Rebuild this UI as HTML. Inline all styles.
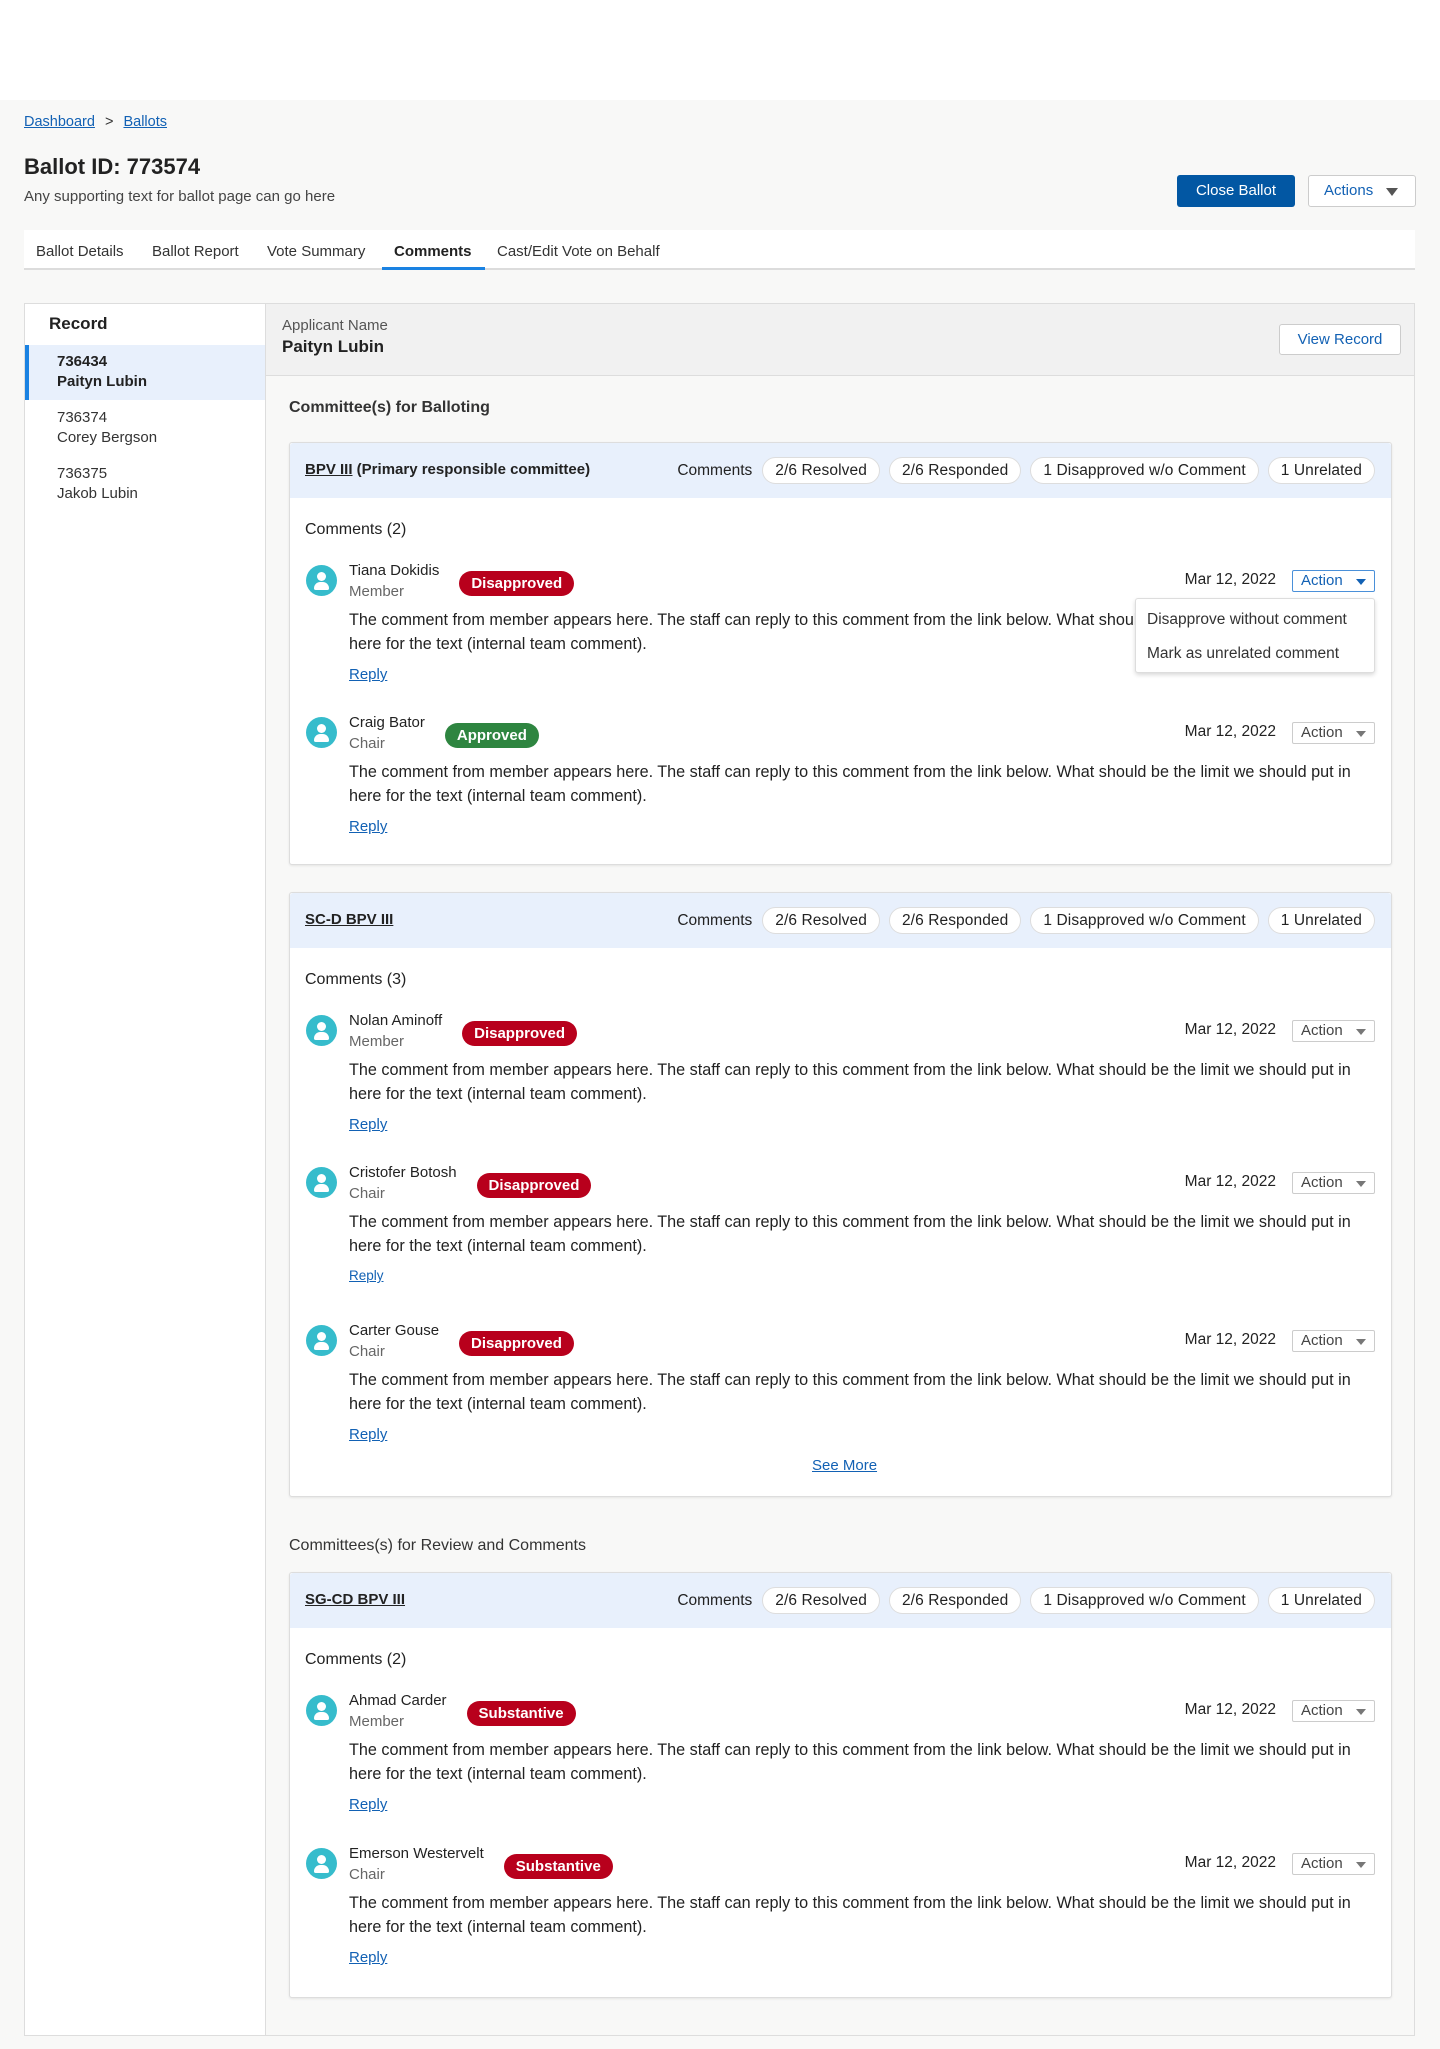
<!DOCTYPE html>
<html><head><meta charset="utf-8">
<style>
*{box-sizing:border-box;margin:0;padding:0}
body{width:1440px;height:2049px;background:#f8f8f7;font-family:"Liberation Sans",sans-serif;color:#222;position:relative;overflow:hidden}
.abs{position:absolute}
a,.link{color:#1261b4;text-decoration:underline}
.topband{left:0;top:0;width:1440px;height:100px;background:#fff}
.tabs{left:24px;top:230px;width:1391px;height:40px;background:#fff;border-bottom:2px solid #dcdcdc}
.tab{position:absolute;top:13px;font-size:15px;color:#333}
.left{left:24px;top:303px;width:241px;height:1733px;background:#fff;border:1px solid #ddd;border-right:none}
.main{left:265px;top:303px;width:1150px;height:1733px;background:#f8f8f7;border:1px solid #ddd}
.card{position:absolute;left:23px;width:1103px;background:#fff;border:1px solid #ddd;border-radius:3px;box-shadow:0 1px 2px rgba(0,0,0,.08)}
.chead{height:55px;background:#e8f0fc;position:relative;border-radius:3px 3px 0 0}
.chead .t{position:absolute;left:15px;top:18px;font-size:15px;font-weight:bold}
.pills{position:absolute;right:16px;top:14px;display:flex;align-items:center;gap:9px;font-size:15.5px}
.pill{height:27px;line-height:25px;padding:0 12px;border:1px solid #ddd;border-radius:14px;background:#fff;color:#222;letter-spacing:.1px}
.ctitle{position:absolute;left:15px;font-size:16px;color:#222}
.cm{position:absolute;left:0;width:1101px;height:152px}
.av{position:absolute;left:16px;top:4px;width:31px;height:31px;border-radius:50%;background:#36bccc;overflow:hidden}
.av:before{content:"";position:absolute;left:11px;top:7px;width:9px;height:9px;border-radius:50%;background:#fff}
.av:after{content:"";position:absolute;left:8px;top:17px;width:15px;height:8px;border-radius:7px 7px 2px 2px;background:#fff}
.nm{position:absolute;left:59px;top:0;display:flex;align-items:flex-start}
.nm .n{font-size:15px;line-height:20px;color:#222}
.nm .r{font-size:15px;line-height:22px;color:#666}
.badge{margin-left:20px;margin-top:10px;height:25px;line-height:25px;padding:0 12px;border-radius:13px;color:#fff;font-weight:bold;font-size:15px}
.red{background:#b8001c}.green{background:#2e8540}
.txt{position:absolute;left:59px;top:47px;font-size:16.2px;line-height:24px;color:#222;white-space:nowrap}
.rep{position:absolute;left:59px;top:105px;font-size:15px}
.date{position:absolute;right:115px;top:10px;font-size:15.5px;color:#222}
.act{position:absolute;right:16px;top:9px;width:83px;height:22px;border:1px solid #ccc;border-radius:2px;font-size:15px;color:#444;padding-left:8px;line-height:20px}
.act:after{content:"";position:absolute;right:8px;top:8px;border:5px solid transparent;border-top:6px solid #777;border-bottom:0}
.act.on{border-color:#4a90d9;color:#1261b4}
.act.on:after{border-top-color:#1261b4}
.sec{position:absolute;left:23px;font-size:16px;color:#333}
</style></head><body>
<div class="abs topband"></div>
<div class="abs" style="left:24px;top:114px;font-size:14.5px"><a>Dashboard</a> <span style="color:#333;margin:0 6px">&gt;</span> <a>Ballots</a></div>
<div class="abs" style="left:24px;top:154px;font-size:22px;font-weight:bold;color:#222">Ballot ID: 773574</div>
<div class="abs" style="left:24px;top:188px;font-size:15px;color:#444">Any supporting text for ballot page can go here</div>
<div class="abs" style="left:1177px;top:175px;width:118px;height:32px;background:#0257a3;border-radius:3px;color:#fff;font-size:15px;text-align:center;line-height:32px">Close Ballot</div>
<div class="abs" style="left:1308px;top:175px;width:108px;height:32px;background:#fff;border:1px solid #ccc;border-radius:3px;color:#1261b4;font-size:15px;line-height:30px;padding-left:15px">Actions<span style="position:absolute;right:17px;top:12px;border:6px solid transparent;border-top:8px solid #555;border-bottom:0"></span></div>
<div class="abs tabs">
<span class="tab" style="left:12px">Ballot Details</span>
<span class="tab" style="left:128px">Ballot Report</span>
<span class="tab" style="left:243px">Vote Summary</span>
<span class="tab" style="left:370px;font-weight:bold;color:#222">Comments</span>
<span class="tab" style="left:473px">Cast/Edit Vote on Behalf</span>
<div style="position:absolute;left:358px;top:37px;width:103px;height:3px;background:#1a82e2"></div>
</div>
<div class="abs left">
<div class="abs" style="left:24px;top:10px;font-size:17px;font-weight:bold;color:#222">Record</div>
<div class="abs" style="left:0;top:41px;width:240px;height:55px;background:#e8f0fc;border-left:4px solid #1a82e2"></div>
<div class="abs" style="left:32px;top:48px;font-size:15px;font-weight:bold;line-height:20px">736434<br>Paityn Lubin</div>
<div class="abs" style="left:32px;top:104px;font-size:15px;line-height:20px;color:#333">736374<br>Corey Bergson</div>
<div class="abs" style="left:32px;top:160px;font-size:15px;line-height:20px;color:#333">736375<br>Jakob Lubin</div>
</div>
<div class="abs main">
<div class="abs" style="left:0;top:0;width:1148px;height:72px;background:#f1f1f1;border-bottom:1px solid #ddd"></div>
<div class="abs" style="left:16px;top:13px;font-size:15px;color:#555">Applicant Name</div>
<div class="abs" style="left:16px;top:33px;font-size:17px;font-weight:bold">Paityn Lubin</div>
<div class="abs" style="left:1013px;top:20px;width:122px;height:31px;background:#fff;border:1px solid #ccc;border-radius:3px;color:#1261b4;font-size:15px;text-align:center;line-height:29px">View Record</div>
<div class="sec" style="top:95px;font-weight:bold">Committee(s) for Balloting</div>

<div class="card" style="top:138px;height:423px">
<div class="chead"><span class="t"><span style="text-decoration:underline">BPV III</span> (Primary responsible committee)</span>
<div class="pills"><span style="margin-right:1px">Comments</span><span class="pill">2/6 Resolved</span><span class="pill">2/6 Responded</span><span class="pill">1 Disapproved w/o Comment</span><span class="pill">1 Unrelated</span></div></div>
<div class="ctitle" style="top:78px">Comments (2)</div>
<div class="cm" style="top:118px"><div class="av"></div><div class="nm"><div><div class="n">Tiana Dokidis</div><div class="r">Member</div></div><span class="badge red">Disapproved</span></div>
<div class="txt">The comment from member appears here. The staff can reply to this comment from the link below. What should be the limit we should put in<br>here for the text (internal team comment).</div><a class="rep">Reply</a><div class="date">Mar 12, 2022</div><div class="act on">Action</div></div>
<div class="cm" style="top:270px"><div class="av"></div><div class="nm"><div><div class="n">Craig Bator</div><div class="r">Chair</div></div><span class="badge green">Approved</span></div>
<div class="txt">The comment from member appears here. The staff can reply to this comment from the link below. What should be the limit we should put in<br>here for the text (internal team comment).</div><a class="rep">Reply</a><div class="date">Mar 12, 2022</div><div class="act">Action</div></div>
<div class="abs" style="left:845px;top:155px;width:240px;height:75px;background:#fff;border:1px solid #ddd;border-radius:3px;box-shadow:0 2px 4px rgba(0,0,0,.15);font-size:15.5px;color:#333;padding:4px 0 0 11px;line-height:34px">Disapprove without comment<br>Mark as unrelated comment</div>
</div>

<div class="card" style="top:588px;height:605px">
<div class="chead"><span class="t"><span style="text-decoration:underline">SC-D BPV III</span></span>
<div class="pills"><span style="margin-right:1px">Comments</span><span class="pill">2/6 Resolved</span><span class="pill">2/6 Responded</span><span class="pill">1 Disapproved w/o Comment</span><span class="pill">1 Unrelated</span></div></div>
<div class="ctitle" style="top:78px">Comments (3)</div>
<div class="cm" style="top:118px"><div class="av"></div><div class="nm"><div><div class="n">Nolan Aminoff</div><div class="r">Member</div></div><span class="badge red">Disapproved</span></div>
<div class="txt">The comment from member appears here. The staff can reply to this comment from the link below. What should be the limit we should put in<br>here for the text (internal team comment).</div><a class="rep">Reply</a><div class="date">Mar 12, 2022</div><div class="act">Action</div></div>
<div class="cm" style="top:270px"><div class="av"></div><div class="nm"><div><div class="n">Cristofer Botosh</div><div class="r">Chair</div></div><span class="badge red">Disapproved</span></div>
<div class="txt">The comment from member appears here. The staff can reply to this comment from the link below. What should be the limit we should put in<br>here for the text (internal team comment).</div><a class="rep" style="font-size:13.5px">Reply</a><div class="date">Mar 12, 2022</div><div class="act">Action</div></div>
<div class="cm" style="top:428px"><div class="av"></div><div class="nm"><div><div class="n">Carter Gouse</div><div class="r">Chair</div></div><span class="badge red">Disapproved</span></div>
<div class="txt">The comment from member appears here. The staff can reply to this comment from the link below. What should be the limit we should put in<br>here for the text (internal team comment).</div><a class="rep">Reply</a><div class="date">Mar 12, 2022</div><div class="act">Action</div></div>
<a class="abs" style="left:522px;top:564px;font-size:15px">See More</a>
</div>

<div class="sec" style="top:1233px">Committees(s) for Review and Comments</div>
<div class="card" style="top:1268px;height:426px">
<div class="chead"><span class="t"><span style="text-decoration:underline">SG-CD BPV III</span></span>
<div class="pills"><span style="margin-right:1px">Comments</span><span class="pill">2/6 Resolved</span><span class="pill">2/6 Responded</span><span class="pill">1 Disapproved w/o Comment</span><span class="pill">1 Unrelated</span></div></div>
<div class="ctitle" style="top:78px">Comments (2)</div>
<div class="cm" style="top:118px"><div class="av"></div><div class="nm"><div><div class="n">Ahmad Carder</div><div class="r">Member</div></div><span class="badge red">Substantive</span></div>
<div class="txt">The comment from member appears here. The staff can reply to this comment from the link below. What should be the limit we should put in<br>here for the text (internal team comment).</div><a class="rep">Reply</a><div class="date">Mar 12, 2022</div><div class="act">Action</div></div>
<div class="cm" style="top:271px"><div class="av"></div><div class="nm"><div><div class="n">Emerson Westervelt</div><div class="r">Chair</div></div><span class="badge red">Substantive</span></div>
<div class="txt">The comment from member appears here. The staff can reply to this comment from the link below. What should be the limit we should put in<br>here for the text (internal team comment).</div><a class="rep">Reply</a><div class="date">Mar 12, 2022</div><div class="act">Action</div></div>
</div>
</div>
</body></html>
